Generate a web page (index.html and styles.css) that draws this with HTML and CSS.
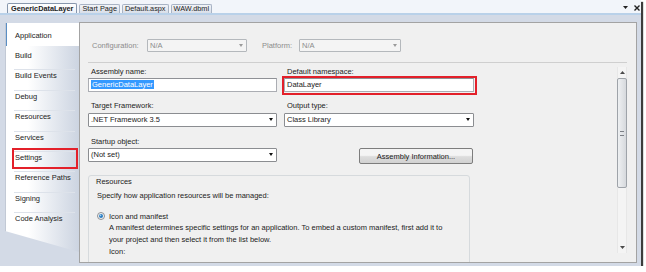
FILE: index.html
```html
<!DOCTYPE html>
<html lang="en">
<head>
    <meta charset="UTF-8">
    <title>GenericDataLayer - Properties</title>
    <link rel="stylesheet" href="styles.css">
</head>
<body>
<div class="window">
    <div class="tabstrip">
        <div class="tab active">GenericDataLayer</div>
        <div class="tab">Start Page</div>
        <div class="tab">Default.aspx</div>
        <div class="tab">WAW.dbml</div>
        <div class="strip-tools">
            <svg width="5" height="3" viewBox="0 0 5 3"><path d="M0 0h5L2.5 3z" fill="#222"/></svg>
            <svg width="6" height="6" viewBox="0 0 6 6"><path d="M0.5 0.5l5 5M5.5 0.5l-5 5" stroke="#222" stroke-width="1.4"/></svg>
        </div>
    </div>

    <div class="frame">
        <ul class="nav">
            <li class="selected">Application</li>
            <li>Build</li>
            <li>Build Events</li>
            <li>Debug</li>
            <li>Resources</li>
            <li>Services</li>
            <li class="marked">Settings</li>
            <li>Reference Paths</li>
            <li>Signing</li>
            <li>Code Analysis</li>
        </ul>

        <div class="panel">
            <div class="config">
                <span class="config-label">Configuration:</span>
                <div class="select disabled w-config">N/A<span class="arrow"></span></div>
                <span class="config-label platform">Platform:</span>
                <div class="select disabled w-platform">N/A<span class="arrow"></span></div>
            </div>
            <div class="sep"></div>

            <div class="scroll">
                <div class="content">
                    <div class="row">
                        <div class="col">
                            <div class="label">Assembly name:</div>
                            <div class="input"><span class="sel">GenericDataLayer</span></div>
                        </div>
                        <div class="col right">
                            <div class="label">Default namespace:</div>
                            <div class="input marked">DataLayer</div>
                        </div>
                    </div>

                    <div class="row gap2">
                        <div class="col">
                            <div class="label">Target Framework:</div>
                            <div class="select tall">.NET Framework 3.5<span class="arrow"></span></div>
                        </div>
                        <div class="col right">
                            <div class="label">Output type:</div>
                            <div class="select tall">Class Library<span class="arrow"></span></div>
                        </div>
                    </div>

                    <div class="row gap3">
                        <div class="col">
                            <div class="label">Startup object:</div>
                            <div class="select">(Not set)<span class="arrow"></span></div>
                        </div>
                        <div class="col right">
                            <button class="btn">Assembly Information...</button>
                        </div>
                    </div>

                    <div class="group">
                        <div class="group-title">Resources</div>
                        <div class="group-text">Specify how application resources will be managed:</div>
                        <div class="radio-row">
                            <svg width="8" height="8" viewBox="0 0 8 8">
                                <circle cx="4" cy="4" r="3.5" fill="#f4f4f4" stroke="#8c8f94"/>
                                <circle cx="4" cy="4" r="2" fill="#2a7bc0"/>
                                <circle cx="3.5" cy="3.4" r="0.8" fill="#9fd0f2"/>
                            </svg>
                            <span>Icon and manifest</span>
                        </div>
                        <div class="desc">
                            A manifest determines specific settings for an application. To embed a custom manifest, first add it to<br>
                            your project and then select it from the list below.<br>
                            Icon:
                        </div>
                    </div>
                </div>

                <div class="vscroll">
                    <div class="sb-btn">
                        <svg width="5" height="3" viewBox="0 0 5 3"><path d="M0 3h5L2.5 0z" fill="#4a4a4a"/></svg>
                    </div>
                    <div class="thumb"><span class="grip"></span></div>
                    <div class="sb-btn bottom">
                        <svg width="5" height="3" viewBox="0 0 5 3"><path d="M0 0h5L2.5 3z" fill="#4a4a4a"/></svg>
                    </div>
                </div>
            </div>
        </div>
    </div>
</div>
</body>
</html>
```

FILE: styles.css
```css
body { margin: 0; background: #fff; font-family: "Liberation Sans", Arial, sans-serif; font-size: 7.5px; color: #222; }

.window { width: 641px; height: 266px; display: flex; flex-direction: column; background: #d3dae6; box-shadow: 2px 2px 1px #3c3c3c; }

/* document tabs */
.tabstrip { height: 13px; display: flex; align-items: flex-end; gap: 2px; padding-left: 7px; background: #f2f5fa; border-bottom: 2px solid #b9d1e9; }
.tab { height: 8px; line-height: 8px; padding: 0 2px; font-size: 7.3px; color: #1c1c1c; background: linear-gradient(#f2f4f8, #d8dee8); border: 1px solid #a8b3c4; border-bottom: none; border-radius: 2px 2px 0 0; }
.tab.active { height: 9px; line-height: 10px; padding: 0 3px; font-weight: bold; background: linear-gradient(#ffffff, #eef2f8); border-color: #8797ad; }
.strip-tools { margin-left: auto; align-self: center; display: flex; align-items: center; gap: 6px; padding: 2px 1px 0 0; }

.frame { flex: 1; display: flex; align-items: flex-start; padding: 7px 4px 3px 5px; }

/* left page list */
.nav { width: 74px; height: 229px; margin: 1px 0 0; padding: 0; list-style: none; box-sizing: border-box; border-left: 1px solid #c2c9d5; background: linear-gradient(to right, #ffffff 30%, #ccd4e1); clip-path: polygon(0 0, 100% 0, 100% 100%, 0 calc(100% - 21px)); }
.nav li { position: relative; height: 16.4px; line-height: 12.4px; margin: 3px 4px 0 8px; padding-left: 1px; border-top: 1px solid #dde2ea; }
.nav li.selected { height: 23px; line-height: 25px; margin: 0; padding-left: 8px; border-top: none; border-left: 1px solid #5a8ec4; background: #fff; }
.nav li.selected + li { margin-top: 0; height: 19.4px; line-height: 18.4px; border-top-color: transparent; }
.nav li.marked::after { content: ""; position: absolute; top: -4px; left: -2px; right: -3px; bottom: -1px; border: 2px solid #e3202a; }

/* property page */
.panel { width: 558px; height: 241px; box-sizing: border-box; border: 1px solid #a3a3a3; background: #f0f0f0; display: flex; flex-direction: column; overflow: hidden; }

.config { display: flex; align-items: center; padding: 16px 0 0 12px; color: #8c8c8c; }
.config-label { width: 55px; }
.config-label.platform { width: 37px; margin-left: 15px; }
.w-config { width: 100px; }
.w-platform { width: 102px; }

.sep { height: 1px; margin: 10px 9px 0 8px; background: #cfcfcf; }

.scroll { display: flex; height: 186px; margin: 4px 9px 0 8px; }
.content { flex: 1; }

.row { display: flex; gap: 7px; }
.row.gap2 { margin-top: 9px; }
.row.gap3 { margin-top: 10px; }
.col { width: 189px; display: flex; flex-direction: column; }
.col.right { width: 190px; }
.label { line-height: 10px; padding-left: 3px; }

.input { position: relative; height: 14px; margin-top: 1px; box-sizing: border-box; padding-left: 2px; line-height: 12px; background: #fff; border: 1px solid #abadb3; border-top-color: #8f9196; }
.input.marked::after { content: ""; position: absolute; top: -3px; left: -3px; right: -4px; bottom: -4px; border: 2px solid #e3202a; }
.sel { background: #3399ff; color: #fff; padding: 0 1px; }

.select { position: relative; height: 14px; margin-top: 1px; box-sizing: border-box; padding-left: 2px; line-height: 12px; background: #fff; border: 1px solid #8b8d91; border-radius: 1px; }
.select.tall { margin-top: 2px; }
.select .arrow { position: absolute; right: 3px; top: 4px; border-left: 2.5px solid transparent; border-right: 2.5px solid transparent; border-top: 3px solid #111; }
.select.disabled { height: 13px; margin-top: 0; line-height: 11px; color: #8c8c8c; background: #f4f4f4; border-color: #b4b8bc; }
.select.disabled .arrow { top: 4px; border-top-color: #9a9a9a; }

.btn { align-self: flex-end; width: 114px; height: 16px; margin: 11px 1px 0 0; padding: 0; font: inherit; color: #222; background: linear-gradient(#f4f4f4 45%, #dcdcdc 55%, #d2d2d2); border: 1px solid #7d7d7d; border-radius: 2px; }

.group { width: 382px; height: 92px; margin-top: 11px; box-sizing: border-box; padding: 1px 0 0 7px; border: 1px solid #d6dadd; border-radius: 3px; }
.group-title { line-height: 10px; }
.group-text { line-height: 10px; margin-top: 4px; padding-left: 1px; }
.radio-row { display: flex; align-items: center; gap: 4px; height: 10px; margin-top: 10px; padding-left: 1px; }
.desc { margin-top: 1px; padding-left: 13px; line-height: 11.8px; white-space: nowrap; }

/* vertical scrollbar */
.vscroll { width: 10px; display: flex; flex-direction: column; align-items: center; box-sizing: border-box; background: #f4f4f4; border-left: 1px solid #e7e7e7; border-right: 1px solid #e7e7e7; }
.sb-btn { height: 11px; display: flex; align-items: center; justify-content: center; }
.sb-btn.bottom { margin-top: auto; }
.thumb { width: 10px; height: 110px; box-sizing: border-box; display: flex; align-items: center; justify-content: center; background: linear-gradient(to right, #eef0f2, #d6d9dd); border: 1px solid #9ea3a9; border-radius: 2px; }
.grip { width: 4px; height: 3px; border-top: 1px solid #7b7f85; border-bottom: 1px solid #7b7f85; }
```
